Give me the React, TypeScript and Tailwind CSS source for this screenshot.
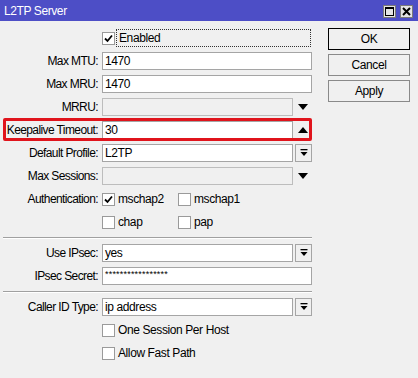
import React from 'react';

const Check: React.FC<{ checked?: boolean }> = ({ checked }) => (
    <div className="w-[13px] h-[13px] shrink-0 bg-white border border-[#9a9a9a] flex items-center justify-center">
        {checked && (
            <svg width="9" height="9" viewBox="0 0 9 9">
                <path d="M1 4.5 L3.5 7 L8 1.5" stroke="#000" strokeWidth="1.8" fill="none" />
            </svg>
        )}
    </div>
);

const DropButton: React.FC = () => (
    <div className="w-[17px] h-[18px] ml-[2px] border border-[#a5a5a5] bg-[#f0f0f0] flex items-center justify-center">
        <svg width="8" height="8" viewBox="0 0 8 8">
            <rect x="0.5" y="0" width="7" height="1.3" fill="#000" />
            <path d="M0.5 3 L7.5 3 L4 7 Z" fill="#000" />
        </svg>
    </div>
);

const Arrow: React.FC<{ up?: boolean }> = ({ up }) => (
    <div className="w-[19px] h-[18px] flex items-center justify-center">
        <svg width="10" height="6" viewBox="0 0 10 6">
            {up ? <path d="M0 6 L10 6 L5 0 Z" fill="#000" /> : <path d="M0 0 L10 0 L5 6 Z" fill="#000" />}
        </svg>
    </div>
);

const Row: React.FC<{ label?: string, children: React.ReactNode, className?: string }> = ({ label, children, className }) => (
    <div className={`relative flex items-center h-[18px] ${className ?? ''}`}>
        <div className="w-[98px] text-right whitespace-nowrap tracking-[-0.6px]">{label ? `${label}:` : ''}</div>
        <div className="ml-[4px] flex items-center">{children}</div>
    </div>
);

const Input: React.FC<{ value?: string, narrow?: boolean, disabled?: boolean, small?: boolean }> = ({ value, narrow, disabled, small }) => (
    <div className={`h-[18px] border border-[#a5a5a5] px-[2px] flex items-center whitespace-nowrap ${narrow ? 'w-[191px]' : 'w-[210px]'} ${disabled ? 'bg-[#f0f0f0] border-[#bdbdbd]' : 'bg-white'} ${small ? 'text-[9px] pb-[3px] tracking-[0.2px]' : ''}`}>
        {value}
    </div>
);

const Divider: React.FC<{ className?: string }> = ({ className }) => (
    <div className={`ml-[3px] w-[309px] border-t border-[#a0a0a0] border-b border-b-white ${className ?? ''}`} />
);

const Btn: React.FC<{ label: string, primary?: boolean }> = ({ label, primary }) => (
    <div className={`w-[82px] h-[22px] flex items-center justify-center bg-[#f0f0f0] border ${primary ? 'border-black' : 'border-[#8a8a8a]'}`}>
        {label}
    </div>
);

export default function App() {
    return (
        <div className="w-[418px] h-[378px] bg-[#f0f0f0] text-black text-[12px] tracking-[-0.4px] font-['Liberation_Sans',Arial,sans-serif] overflow-hidden">
            <div className="h-[21px] bg-[#4d4ec6] flex items-center justify-between pl-[4px] pr-[5px]">
                <span className="text-white text-[12px]">L2TP Server</span>
                <div className="flex gap-[4px] pt-[1px]">
                    <div className="w-[13px] h-[13px] bg-[#e4e4e4] border border-[#7a7a7a] flex items-center justify-center">
                        <svg width="9" height="9" viewBox="0 0 9 9">
                            <rect x="0.5" y="0.5" width="8" height="8" fill="none" stroke="#000" />
                            <rect x="0" y="0" width="9" height="2" fill="#000" />
                        </svg>
                    </div>
                    <div className="w-[13px] h-[13px] bg-[#e4e4e4] border border-[#7a7a7a] flex items-center justify-center">
                        <svg width="9" height="9" viewBox="0 0 9 9">
                            <path d="M1 1 L8 8 M8 1 L1 8" stroke="#000" strokeWidth="2" />
                        </svg>
                    </div>
                </div>
            </div>
            <div className="flex">
                <div className="w-[318px] pt-[8px] flex flex-col gap-[5px]">
                    <Row>
                        <Check checked />
                        <div className="ml-[1px] w-[195px] h-[18px] border border-dotted border-[#333] flex items-center pl-[2px]">Enabled</div>
                    </Row>
                    <Row label="Max MTU"><Input value="1470" /></Row>
                    <Row label="Max MRU"><Input value="1470" /></Row>
                    <Row label="MRRU"><Input narrow disabled /><Arrow /></Row>
                    <Row label="Keepalive Timeout">
                        <Input narrow value="30" /><Arrow up />
                        <div className="absolute left-[3px] -top-[3px] -bottom-[2px] w-[309px] border-[3px] border-[#e0141c] rounded-[2px]" />
                    </Row>
                    <Row label="Default Profile"><Input narrow value="L2TP" /><DropButton /></Row>
                    <Row label="Max Sessions"><Input narrow disabled /><Arrow /></Row>
                    <Row label="Authentication">
                        <div className="w-[76px] flex items-center gap-[3px]"><Check checked /><span>mschap2</span></div>
                        <div className="flex items-center gap-[3px]"><Check /><span>mschap1</span></div>
                    </Row>
                    <Row>
                        <div className="w-[76px] flex items-center gap-[3px]"><Check /><span>chap</span></div>
                        <div className="flex items-center gap-[3px]"><Check /><span>pap</span></div>
                    </Row>
                    <Divider className="mt-[1px]" />
                    <Row label="Use IPsec"><Input narrow value="yes" /><DropButton /></Row>
                    <Row label="IPsec Secret"><Input small value="*****************" /></Row>
                    <Divider className="mt-[1px]" />
                    <Row label="Caller ID Type"><Input narrow value="ip address" /><DropButton /></Row>
                    <Row><div className="flex items-center gap-[3px]"><Check /><span>One Session Per Host</span></div></Row>
                    <Row><div className="flex items-center gap-[3px]"><Check /><span>Allow Fast Path</span></div></Row>
                </div>
                <div className="pl-[10px] pt-[7px] flex flex-col gap-[4px]">
                    <Btn label="OK" primary />
                    <Btn label="Cancel" />
                    <Btn label="Apply" />
                </div>
            </div>
        </div>
    );
}
